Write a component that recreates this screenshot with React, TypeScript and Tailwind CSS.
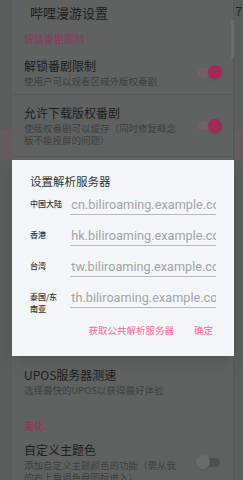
import React from 'react';

const cjk = { fontFamily: '"Noto Sans CJK SC", "Noto Sans", sans-serif' };
const latin = { fontFamily: 'Roboto, "Noto Sans CJK SC", sans-serif' };

const Toggle = ({ on }: { on: boolean }) => (
  <div className="relative w-[24px] h-[16px] flex items-center">
    <div className={`w-[22px] h-[9px] rounded-full ${on ? 'bg-[#785e67]' : 'bg-[#4e5050]'}`} />
    <div
      className={`absolute top-[1px] w-[14px] h-[14px] rounded-full shadow ${on ? 'right-0 bg-[#a02955]' : 'left-[-2px] bg-[#6b6d6d]'}`}
    />
  </div>
);

const Item = ({ title, sub, on, h }: { title: string; sub: string; on?: boolean; h: string }) => (
  <div className={`flex items-center pl-[12px] pr-[11px] ${h}`}>
    <div className="flex-1 pr-[19px]">
      <div className="text-[12px] leading-[16px] text-[#1c1d1d]">{title}</div>
      <div className="text-[9.5px] leading-[12px] text-[#3c3e3e] mt-[1px]">{sub}</div>
    </div>
    {on !== undefined && <Toggle on={on} />}
  </div>
);

const Row = ({ label, value }: { label: React.ReactNode; value: string }) => (
  <div className="flex items-start h-[31px]">
    <div className="w-[41px] pt-[2px] text-[8px] leading-[12px] font-medium text-[#333]">{label}</div>
    <div className="w-[148px] border-b border-[#b9b9b9] overflow-hidden h-[19px]">
      <div style={latin} className="text-[12.7px] leading-[17px] text-[#a3a3a3] whitespace-nowrap pl-[1px]">
        {value}
      </div>
    </div>
  </div>
);

export default function App() {
  return (
    <div style={cjk} className="relative w-[243px] h-[480px] overflow-hidden bg-[#5b5d5d]">
      {/* background page peeking out */}
      <div className="absolute left-0 top-[130px] w-[12px] h-[30px] bg-[#645c5f]" />
      <div className="absolute right-0 top-[130px] w-[8px] h-[30px] bg-[#645c5f]" />
      <div className="absolute right-[1px] top-[4px] text-[12px] leading-[14px] text-[#1c1d1d]">7</div>

      <div className="relative ml-[12px] w-[222px] h-[480px] bg-[#606262] border-r border-[#555757]">
        <div className="absolute right-[-1px] top-[20px] w-[3px] h-[38px] bg-[#6b6d6d]" />
        <div className="h-[26px] flex items-center pl-[18px] text-[13px] text-[#1c1d1d]">哔哩漫游设置</div>
        <div className="h-[24px] flex items-center pl-[12px] text-[10px] font-medium text-[#93355a]">解锁番剧限制</div>
        <Item title="解锁番剧限制" sub="使用户可以观看区域外版权番剧" on h="h-[44px]" />
        <div className="h-px bg-[#575959] mx-[1px]" />
        <Item title="允许下载版权番剧" sub="使版权番剧可以缓存（同时修复概念版不能投屏的问题）" on h="h-[61px]" />
        <div className="h-px bg-[#575959] mx-[1px]" />
        <div className="h-[203px]" />
        <Item title="UPOS服务器测速" sub="选择最快的UPOS以获得最好体验" h="h-[42px]" />
        <div className="h-[31px] flex items-end pl-[12px] text-[10px] font-medium text-[#93355a]">美化</div>
        <Item title="自定义主题色" sub="添加自定义主题颜色的功能（需从我的右上角调色盘图标进入）" on={false} h="h-[58px]" />
      </div>

      {/* dialog */}
      <div className="absolute left-[12px] top-[160px] w-[222px] h-[196px] bg-[#f4f7fa] shadow-lg px-[18px]">
        <div className="pt-[13px] h-[36px] text-[11.5px] leading-[16px] text-[#333]">设置解析服务器</div>
        <Row label="中国大陆" value="cn.biliroaming.example.com" />
        <Row label="香港" value="hk.biliroaming.example.com" />
        <Row label="台湾" value="tw.biliroaming.example.com" />
        <Row label={<>泰国/东<br />南亚</>} value="th.biliroaming.example.com" />
        <div className="flex justify-end items-center gap-[20px] pr-[3px] mt-[3px] text-[9.5px] text-[#ef6b98]">
          <span>获取公共解析服务器</span>
          <span>确定</span>
        </div>
      </div>
    </div>
  );
}
